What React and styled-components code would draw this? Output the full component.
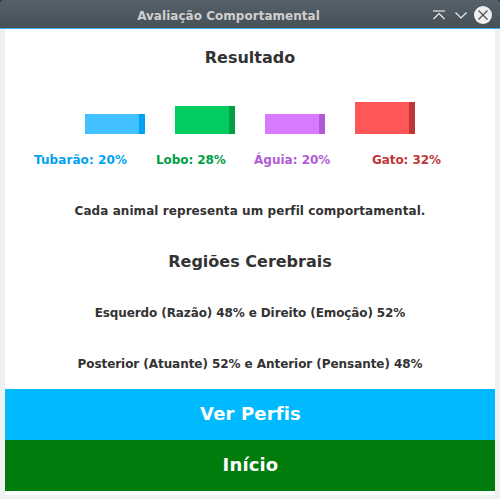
import React from "react";
import styled, { createGlobalStyle } from "styled-components";

const Global = createGlobalStyle`
  * { box-sizing: border-box; }
  body { margin: 0; background: #eff0f1; font-family: "DejaVu Sans", sans-serif; font-weight: bold; }
`;
const Window = styled.div`
  width: 500px; height: 499px; display: flex; flex-direction: column; overflow: hidden;
  background: linear-gradient(#1b2229 0 4px, #eff0f1 4px);
`;
const TitleBar = styled.header`
  height: 29px; flex: none; position: relative;
  background: linear-gradient(#566169, #475057); border-bottom: 1px solid #3daee9;
  border-radius: 3px 3px 0 0;
`;
const Title = styled.h1`
  margin: 0; padding-right: 43px; font-size: 12px; line-height: 33px; height: 28px; text-align: center;
  letter-spacing: 0.03px; color: #cfcfcf;
`;
const Controls = styled.svg`
  position: absolute; right: 0; top: 0;
`;
const Body = styled.main`
  width: 490px; height: 466px; margin: 0 5px; background: #fff; display: flex; flex-direction: column; color: #333;
`;
const Line = styled.p`
  margin: 0; height: 51px; line-height: 53px; text-align: center; white-space: nowrap;
  font-size: 12px; letter-spacing: ${(p) => p.$track || 0}px;
`;
const Heading = styled.h2`
  margin: 0; height: 51px; line-height: ${(p) => p.$lead || 51}px; text-align: center; font-size: 16px;
`;
const Bars = styled.div`
  height: 54px; padding-left: 80px; display: flex; align-items: flex-end; gap: 30px;
`;
const Bar = styled.div`
  width: 60px; height: ${(p) => p.$h}px; background: ${(p) => p.$light}; border-right: 6px solid ${(p) => p.$dark};
`;
const Labels = styled.div`
  height: 51px; line-height: 53px; display: flex; padding-left: 29px; font-size: 12px; white-space: nowrap;
`;
const Label = styled.span`
  width: ${(p) => p.$w}px; color: ${(p) => p.$color}; letter-spacing: ${(p) => p.$track}px;
`;
const Button = styled.button`
  height: 51px; border: 0; padding: 0 0 2px 1px; color: #fff; background: ${(p) => p.$bg};
  font: bold 18px "DejaVu Sans", sans-serif; letter-spacing: 0.15px;
`;

const animals = [
  { name: "Tubarão", value: 20, light: "#42c0ff", dark: "#00a2f3", w: 122, track: 0.08 },
  { name: "Lobo", value: 28, light: "#00cc5f", dark: "#009f46", w: 98, track: -0.08 },
  { name: "Águia", value: 20, light: "#d77aff", dark: "#b05bd6", w: 118, track: 0 },
  { name: "Gato", value: 32, light: "#ff5757", dark: "#c13737", w: 80, track: -0.08 },
];

export default function App() {
  return (
    <>
      <Global />
      <Window>
        <TitleBar>
          <Title>Avaliação Comportamental</Title>
          <Controls width="75" height="28" viewBox="425 0 75 28" fill="none" stroke="#eff0f1">
            <path d="M433 11h12" strokeWidth="2" stroke="#a9aeb2" />
            <path d="M433.500 19l5.500-5.500 5.500 5.500M455.500 12.500l5.500 5.500 5.500-5.500" strokeWidth="1.200" />
            <circle cx="483" cy="15" r="9" fill="#eff0f1" stroke="none" />
            <path d="M478.500 10.500l9 9m0-9l-9 9" stroke="#475057" strokeWidth="1.200" />
          </Controls>
        </TitleBar>
        <Body>
          <Heading $lead={58}>Resultado</Heading>
          <Bars>
            {animals.map((a) => <Bar key={a.name} $h={a.value} $light={a.light} $dark={a.dark} />)}
          </Bars>
          <Labels>
            {animals.map((a) => (
              <Label key={a.name} $w={a.w} $color={a.dark} $track={a.track}>{a.name}: {a.value}%</Label>
            ))}
          </Labels>
          <Line $track={0.07}>Cada animal representa um perfil comportamental.</Line>
          <Heading>Regiões Cerebrais</Heading>
          <Line $track={-0.11}>Esquerdo (Razão) 48% e Direito (Emoção) 52%</Line>
          <Line $track={-0.06}>Posterior (Atuante) 52% e Anterior (Pensante) 48%</Line>
          <Button $bg="#00b9ff">Ver Perfis</Button>
          <Button $bg="#007c0c">Início</Button>
        </Body>
      </Window>
    </>
  );
}
